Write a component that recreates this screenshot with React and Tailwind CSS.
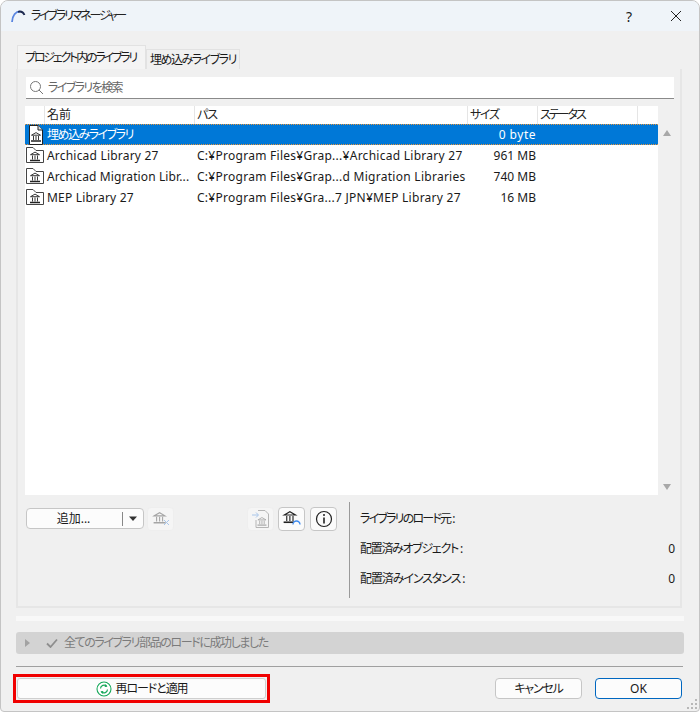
import React from 'react';

const font = "font-['Noto_Sans','Noto_Sans_CJK_JP',sans-serif] [font-feature-settings:'palt']";

const rows = [
  { name: '埋め込みライブラリ', nameClass: 'tracking-[-1.5px]', path: '', size: '0 byte', sizeClass: 'tracking-[0.5px]', kind: 'file', selected: true },
  { name: 'Archicad Library 27', nameClass: 'tracking-[0.2px]', path: 'C:¥Program Files¥Grap...¥Archicad Library 27', size: '961 MB', kind: 'folder' },
  { name: 'Archicad Migration Libr...', nameClass: 'tracking-[0.12px]', path: 'C:¥Program Files¥Grap...d Migration Libraries', size: '740 MB', kind: 'folder' },
  { name: 'MEP Library 27', nameClass: 'tracking-[0.2px]', path: 'C:¥Program Files¥Gra...7 JPN¥MEP Library 27', size: '16 MB', kind: 'folder' }
];

function Bank({ x = 0, y = 0, color = '#222', scale = 1 }) {
  return (
    <g transform={`translate(${x} ${y}) scale(${scale})`} stroke={color} fill="none" strokeWidth="0.9">
      <path d="M1 3.2 L5.5 0.6 L10 3.2 Z" />
      <path d="M3 4 V8 M5.5 4 V8 M8 4 V8" />
      <path d="M0.5 9 H10.5" strokeWidth="1.3" />
    </g>
  );
}

function FileIcon() {
  return (
    <svg width="18" height="20" viewBox="0 0 18 20" className="shrink-0">
      <path d="M2.5 0.5 H11 L15.5 5 V19.5 H2.5 Z" fill="#fff" stroke="#222" />
      <path d="M11 0.5 V5 H15.5" fill="#ddd" stroke="#222" />
      <Bank x={3.5} y={7} />
    </svg>
  );
}

function FolderIcon() {
  return (
    <svg width="19" height="17" viewBox="0 0 19 17" className="shrink-0">
      <path d="M0.5 0.5 H7 L10 3.5 H17.5 V15.5 H0.5 Z" fill="#fff" stroke="#444" />
      <Bank x={3.5} y={4.5} />
    </svg>
  );
}

function ArcLogo() {
  return (
    <svg width="16" height="14" viewBox="0 0 16 14">
      <path d="M2 13 C2.5 6 6 2.5 10 2.5" fill="none" stroke="#5b86e0" strokeWidth="1.8" />
      <path d="M8 2.8 C10 2.2 13 2.6 14.5 6" fill="none" stroke="#1d2a50" strokeWidth="1.8" />
    </svg>
  );
}

function ToolButton({ disabled, children }) {
  return (
    <div
      className={`w-[27px] h-[24px] flex items-center justify-center rounded-[4px] border ${
        disabled ? 'bg-[#f5f5f5] border-[#eeeeee]' : 'bg-[#fbfbfb] border-[#c6c6c6]'
      }`}
    >
      {children}
    </div>
  );
}

function Row({ row }) {
  return (
    <div
      className={`grid grid-cols-[19px_150px_273px_70px] items-center h-[21px] ${
        row.selected
          ? 'bg-[#0078d7] text-white border-y border-dotted border-[#e8963c]'
          : 'text-[#1a1a1a]'
      }`}
    >
      <div className="flex justify-center pl-[2px]">
        {row.kind === 'file' ? <FileIcon /> : <FolderIcon />}
      </div>
      <div className={`pl-[3px] whitespace-nowrap overflow-hidden ${row.nameClass}`}>{row.name}</div>
      <div className="pl-[3px] whitespace-nowrap overflow-hidden tracking-[0.27px]">{row.path}</div>
      <div className={`text-right pr-[1px] whitespace-nowrap ${row.sizeClass || ''}`}>{row.size}</div>
    </div>
  );
}

function HeaderCell({ className = '', children }) {
  return <div className={`border-l border-[#e5e5e5] pl-[2px] leading-[18px] ${className}`}>{children}</div>;
}

function InfoRow({ label, value, className }) {
  return (
    <div className="flex justify-between items-center h-[30px]">
      <span>
        <span className={className}>{label}</span>
        <span className="ml-[2px]">:</span>
      </span>
      <span>{value}</span>
    </div>
  );
}

export default function App() {
  return (
    <div className={`${font} relative w-[700px] h-[712px] bg-[#f0f0f0] text-[12px] text-[#1a1a1a] border border-[#c4c4c4] rounded-t-[8px] rounded-b-[4px] overflow-hidden flex flex-col`}>
      <div className="h-[30px] shrink-0 bg-[#eff4f9] flex items-center pl-[9px]">
        <ArcLogo />
        <span className="ml-[5px] text-[#222] tracking-[-2.2px]">ライブラリマネージャー</span>
        <span className="ml-auto text-[14px] mr-[38px]">?</span>
        <svg width="12" height="12" viewBox="0 0 12 12" className="mr-[17px]">
          <path d="M1 1 L11 11 M11 1 L1 11" stroke="#222" strokeWidth="1" />
        </svg>
      </div>

      <div className="flex-1 flex flex-col pl-[15px] pr-[15px]">
        <div className="flex items-end h-[38px] pl-[1px]">
          <div className="w-[129px] h-[24px] bg-[#f4f4f4] border border-b-0 border-[#e2e2e2] flex items-center pl-[7px] whitespace-nowrap tracking-[-2.2px]">
            プロジェクト内のライブラリ
          </div>
          <div className="w-[94px] h-[20px] bg-[#f0f0f0] border border-b-0 border-[#e2e2e2] flex items-center pl-[3px] whitespace-nowrap tracking-[-1.5px]">
            埋め込みライブラリ
          </div>
        </div>

        <div className="w-[666px] h-[539px] border-2 border-t-0 border-[#e6e6e6] bg-[#f0f0f0] pl-[7px] pr-[5px] flex flex-col">
          <div className="h-[22px] mt-[8px] ml-px bg-white border-b border-[#8a8a8a] flex items-center pl-[3px] text-[#666] w-[648px] tracking-[-1.6px]">
            <svg width="15" height="15" viewBox="0 0 15 15" className="mr-[4px]">
              <circle cx="6.5" cy="6.5" r="5" fill="none" stroke="#777" />
              <path d="M10 10 L14 14" stroke="#777" />
            </svg>
            ライブラリを検索
          </div>

          <div className="w-[633px] h-[389px] mt-[7px] bg-white">
            <div className="grid grid-cols-[19px_150px_273px_70px_100px_21px] h-[18px] text-[#222]">
              <div />
              <HeaderCell>名前</HeaderCell>
              <HeaderCell className="tracking-[-1px]">パス</HeaderCell>
              <HeaderCell className="tracking-[-1.3px]">サイズ</HeaderCell>
              <HeaderCell className="tracking-[-2px]">ステータス</HeaderCell>
              <HeaderCell />
            </div>
            {rows.map((row) => (
              <Row key={row.name} row={row} />
            ))}
          </div>

          <div className="flex flex-1 min-h-0">
            <div className="flex items-start pt-[5px] w-[325px] border-r border-[#9a9a9a] mt-[7px] mb-[8px]">
              <div className="w-[118px] h-[21px] ml-px mt-px bg-[#fcfcfc] border border-[#c6c6c6] rounded-[4px] flex items-center">
                <span className="flex-1 text-center pr-[2px] leading-none">追加...</span>
                <span className="w-px h-[14px] bg-[#888]" />
                <svg width="20" height="8" viewBox="0 0 20 8">
                  <path d="M6 1.5 H14 L10 6 Z" fill="#333" />
                </svg>
              </div>
              <div className="ml-[3px]">
                <ToolButton disabled>
                  <svg width="20" height="18" viewBox="0 0 20 18">
                    <Bank x={2} y={2} color="#a5a5a5" scale={1.2} />
                    <path d="M13 10 L18 15 M18 10 L13 15" stroke="#a9c6ea" />
                  </svg>
                </ToolButton>
              </div>
              <div className="ml-[73px] flex gap-[4px]">
                <ToolButton disabled>
                  <svg width="20" height="20" viewBox="0 0 20 20">
                    <path d="M7 1.5 H14 L17.5 5 V18.5 H5 V11" fill="none" stroke="#b5b5b5" />
                    <path d="M1 6 H7 M5 3.5 L7.5 6 L5 8.5" fill="none" stroke="#a9c6ea" />
                    <Bank x={6} y={8} color="#a5a5a5" scale={0.9} />
                  </svg>
                </ToolButton>
                <ToolButton>
                  <svg width="20" height="18" viewBox="0 0 20 18">
                    <Bank x={1} y={1} color="#222" scale={1.25} />
                    <path d="M11 14.5 A3.5 3.5 0 0 1 18 14.5" fill="#fbfbfb" stroke="#3d8bf0" strokeWidth="1.3" />
                  </svg>
                </ToolButton>
                <div className="ml-px">
                  <ToolButton>
                    <svg width="18" height="18" viewBox="0 0 18 18">
                      <circle cx="9" cy="9" r="7.5" fill="none" stroke="#222" strokeWidth="1.2" />
                      <path d="M9 7.5 V13.5" stroke="#222" strokeWidth="1.6" />
                      <circle cx="9" cy="5" r="1" fill="#222" />
                    </svg>
                  </ToolButton>
                </div>
              </div>
            </div>
            <div className="flex-1 pl-[10px] pt-[9px]">
              <InfoRow label="ライブラリのロード元" className="tracking-[-1.8px]" />
              <InfoRow label="配置済みオブジェクト" value="0" className="tracking-[-1.3px]" />
              <InfoRow label="配置済みインスタンス" value="0" className="tracking-[-1.1px]" />
            </div>
          </div>
        </div>

        <div className="h-[5px] mt-[8px] bg-[#f8f8f8] w-[668px]" />

        <div className="h-[22px] mt-[11px] w-[668px] bg-[#d3d3d3] rounded-[3px] flex items-center pl-[9px] text-[#7b7b7b]">
          <svg width="5" height="8" viewBox="0 0 5 8">
            <path d="M0 0 L5 4 L0 8 Z" fill="#a2a2a2" />
          </svg>
          <svg width="12" height="10" viewBox="0 0 12 10" className="ml-[16px]">
            <path d="M1 5.5 L4.5 9 L11 1.5" fill="none" stroke="#8e8e8e" strokeWidth="1.8" />
          </svg>
          <span className="ml-[6px] tracking-[-1.4px]">全てのライブラリ部品のロードに成功しました</span>
        </div>

        <div className="h-px mt-[12px] bg-[#a0a0a0] w-[667px]" />

        <div className="flex items-center mt-[7px] -ml-[3px]">
          <div className="border-[3px] border-[#f00000] p-px">
            <div className="w-[249px] h-[21px] pt-px bg-[#fcfcfc] border border-[#cfcfcf] rounded-[3px] flex items-center justify-center gap-[4px]">
              <svg width="16" height="16" viewBox="0 0 16 16">
                <circle cx="8" cy="8" r="7" fill="#fff" stroke="#16a85a" strokeWidth="1.1" />
                <path d="M4.5 7.5 A3.6 3.6 0 0 1 10.5 5 M11.5 8.5 A3.6 3.6 0 0 1 5.5 11" fill="none" stroke="#16a85a" strokeWidth="1.2" />
                <path d="M9.5 3 L11.5 5.8 L8.6 6 Z M6.5 13 L4.5 10.2 L7.4 10 Z" fill="#16a85a" />
              </svg>
              <span className="tracking-[-1.1px]">再ロードと適用</span>
            </div>
          </div>
          <div className="ml-auto flex gap-[13px] mr-[2px]">
            <div className="w-[87px] h-[21px] pt-px bg-[#fcfcfc] border border-[#c6c6c6] rounded-[4px] flex items-center justify-center tracking-[-1.2px]">キャンセル</div>
            <div className="w-[87px] h-[21px] pt-px bg-[#fcfcfc] border border-[#0067c0] rounded-[4px] flex items-center justify-center">OK</div>
          </div>
        </div>
      </div>

      <svg width="12" height="12" viewBox="0 0 12 12" className="absolute right-[1px] bottom-[1px]">
        <path d="M9 1 h2 v2 h-2 Z M5 5 h2 v2 h-2 Z M9 5 h2 v2 h-2 Z M1 9 h2 v2 h-2 Z M5 9 h2 v2 h-2 Z M9 9 h2 v2 h-2 Z" fill="#b8b8b8" />
      </svg>

      <div className="absolute left-[662px] top-[129px] w-0 h-0 border-x-[4px] border-x-transparent border-b-[6px] border-b-[#a8a8a8]" />
      <div className="absolute left-[662px] top-[483px] w-0 h-0 border-x-[4px] border-x-transparent border-t-[6px] border-t-[#a8a8a8]" />
    </div>
  );
}
